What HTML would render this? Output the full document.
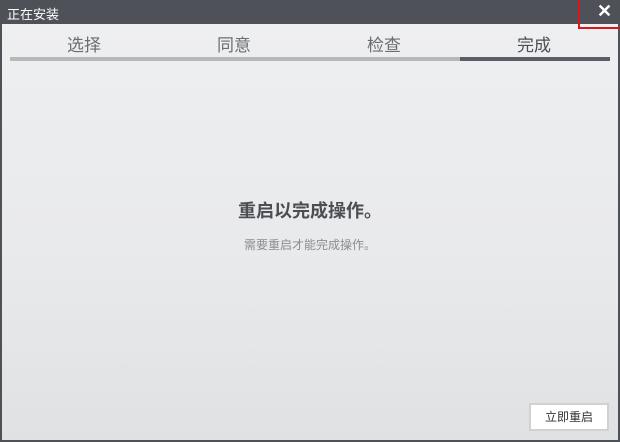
<!DOCTYPE html>
<html><head><meta charset="utf-8"><style>
*{margin:0;padding:0;box-sizing:border-box}
body{width:620px;height:442px;overflow:hidden;background:#4e5258;font-family:"Liberation Sans","Noto Sans CJK SC",sans-serif;position:relative}
.t{position:absolute;left:7px;top:4px;color:#fff;font-size:13px}
.x{position:absolute;left:578px;top:0;width:42px;height:29px;border:2px solid #d9161c;border-top:none;border-right:none}
.x span{position:absolute;left:17px;top:1px;color:#fff;font-size:18px;font-weight:bold}
.m{position:absolute;left:2px;top:24px;width:616px;height:416px;background:linear-gradient(#eeeff0,#e8e9eb 60%,#dfe1e3)}
.tab{position:absolute;top:7px;font-size:17px;color:#6a6d72;width:100px;text-align:center}
.bar{position:absolute;left:8px;top:33px;width:600px;height:4px;background:#b8b8b8}
.bar i{position:absolute;left:450px;top:0;width:150px;height:4px;background:#5a5e64}
.h{position:absolute;top:173px;width:100%;text-align:center;font-size:18px;font-weight:bold;color:#4b4e53}
.s{position:absolute;top:212px;width:100%;text-align:center;font-size:12px;color:#8a8d91}
.b{position:absolute;left:527px;top:379px;width:80px;height:28px;background:#fff;border:2px solid #cfd1d3;font-size:12px;text-align:center;line-height:24px;color:#333}
</style></head><body>
<div class="t">正在安装</div>
<div class="m">
<div class="tab" style="left:32px">选择</div>
<div class="tab" style="left:182px">同意</div>
<div class="tab" style="left:332px">检查</div>
<div class="tab" style="left:482px;color:#4b4e53">完成</div>
<div class="bar"><i></i></div>
<div class="h">重启以完成操作。</div>
<div class="s">需要重启才能完成操作。</div>
<div class="b">立即重启</div>
</div>
<div class="x"><span>✕</span></div>
</body></html>
